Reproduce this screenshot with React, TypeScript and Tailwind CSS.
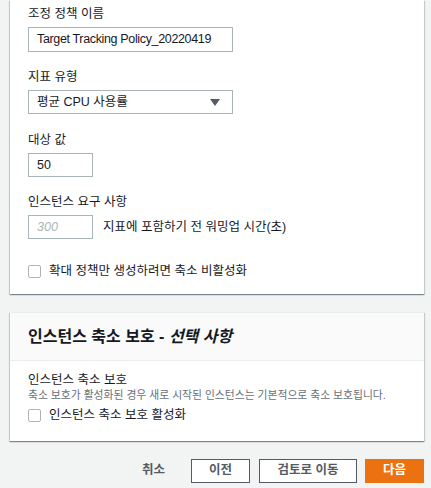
import React from "react";

const font = { fontFamily: '"Liberation Sans", "Noto Sans CJK KR", sans-serif' };

function Checkbox() {
  return <span className="inline-block w-[13px] h-[13px] border border-[#aab7b8] rounded-[2px] bg-white shrink-0" />;
}

export default function App() {
  return (
    <div className="w-[431px] h-[488px] bg-[#f2f3f3] text-[#16191f] overflow-hidden" style={font}>
      <div className="ml-[10px] w-[414px] bg-white shadow-[0_1px_1px_0_rgba(0,28,36,0.3),1px_1px_1px_0_rgba(0,28,36,0.15),-1px_1px_1px_0_rgba(0,28,36,0.15)] pl-[18px] pt-[6px] h-[294px] text-[12.5px]">
        <div className="leading-[16px] h-[16px]">조정 정책 이름</div>
        <div className="mt-[5px] w-[205px] h-[25px] border border-[#aab7b8] flex items-center pl-[8px] text-[12.5px] tracking-[-0.35px]">Target Tracking Policy_20220419</div>
        <div className="mt-[17px] leading-[16px] h-[16px]">지표 유형</div>
        <div className="mt-[5px] w-[205px] h-[24px] border border-[#aab7b8] flex items-center justify-between pl-[8px] pr-[12px]">
          <span>평균 CPU 사용률</span>
          <svg width="10" height="7" viewBox="0 0 10 7"><path d="M0 0 H10 L5 7 Z" fill="#545b64" /></svg>
        </div>
        <div className="mt-[18px] leading-[16px] h-[16px]">대상 값</div>
        <div className="mt-[5px] w-[65px] h-[24px] border border-[#aab7b8] flex items-center pl-[8px]">50</div>
        <div className="mt-[17px] leading-[16px] h-[16px]">인스턴스 요구 사항</div>
        <div className="mt-[5px] flex items-center gap-[10px]">
          <div className="w-[65px] h-[24px] border border-[#aab7b8] flex items-center pl-[8px] italic text-[#aab7b8]">300</div>
          <span>지표에 포함하기 전 워밍업 시간(초)</span>
        </div>
        <div className="mt-[23px] flex items-center gap-[8px]">
          <Checkbox />
          <span>확대 정책만 생성하려면 축소 비활성화</span>
        </div>
      </div>

      <div className="ml-[10px] mt-[18px] w-[414px] bg-white shadow-[0_1px_1px_0_rgba(0,28,36,0.3),1px_1px_1px_0_rgba(0,28,36,0.15),-1px_1px_1px_0_rgba(0,28,36,0.15)] border-t border-[#eaeded]">
        <div className="h-[48px] bg-[#fafafa] border-b border-[#eaeded] flex items-center pl-[18px] text-[16px] font-bold">
          인스턴스 축소 보호 -&nbsp;<span className="italic">선택 사항</span>
        </div>
        <div className="pl-[18px] pt-[11px] pb-[16px] text-[12.5px]">
          <div className="leading-[16px]">인스턴스 축소 보호</div>
          <div className="leading-[14px] text-[10.8px] text-[#687078]">축소 보호가 활성화된 경우 새로 시작된 인스턴스는 기본적으로 축소 보호됩니다.</div>
          <div className="mt-[4px] flex items-center gap-[8px]">
            <Checkbox />
            <span>인스턴스 축소 보호 활성화</span>
          </div>
        </div>
      </div>

      <div className="mt-[18px] flex items-center justify-end pr-[7px] text-[12.5px] font-bold">
        <span className="mr-[26px] text-[#545b64]">취소</span>
        <div className="w-[59px] h-[24px] border border-[#545b64] bg-white flex items-center justify-center text-[#545b64]">이전</div>
        <div className="ml-[9px] w-[98px] h-[24px] border border-[#545b64] bg-white flex items-center justify-center text-[#545b64]">검토로 이동</div>
        <div className="ml-[8px] w-[59px] h-[24px] bg-[#ec7211] flex items-center justify-center text-white">다음</div>
      </div>
    </div>
  );
}
